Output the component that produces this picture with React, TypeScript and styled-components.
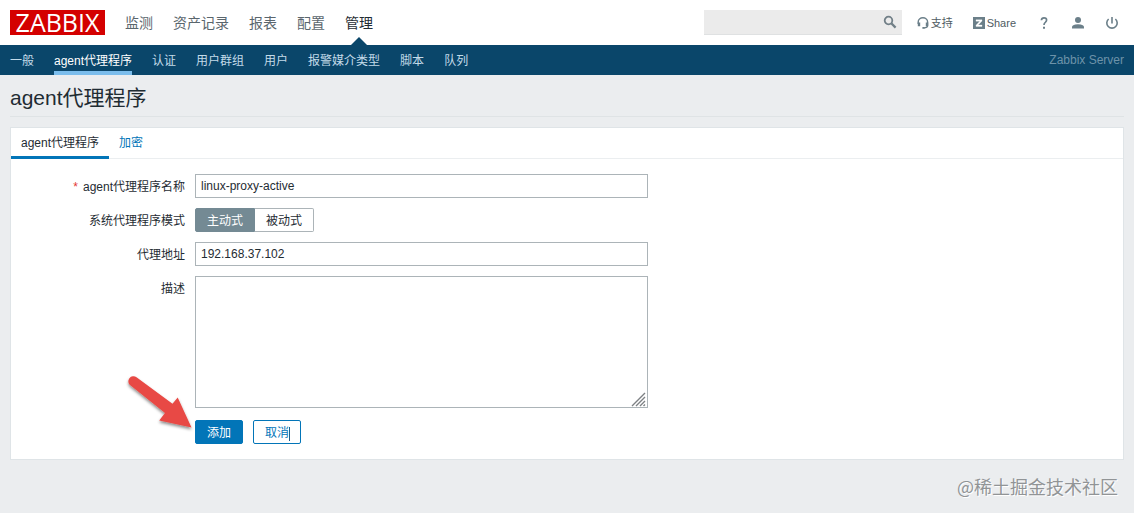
import React, { useState } from 'react';
import styled, { createGlobalStyle } from 'styled-components';

const GlobalStyle = createGlobalStyle`
  * { box-sizing: border-box; }
  body {
    margin: 0;
    background: #ebedef;
    color: #1f2c33;
    font-family: "Liberation Sans", "Noto Sans CJK SC", sans-serif;
    font-size: 12px;
    line-height: 18px;
  }
  input, button, textarea { font: inherit; color: inherit; }
  a { text-decoration: none; }
`;

const Page = styled.div`
  position: relative;
  min-height: 100vh;
`;

const TopBar = styled.header`
  display: flex;
  align-items: center;
  height: 45px;
  padding: 0 15px 0 10px;
  background: #ffffff;
`;

const Logo = styled.a`
  display: flex;
  align-items: center;
  justify-content: center;
  width: 95px;
  height: 25px;
  background: #d40000;
  color: #ffffff;
  font: 500 25px/25px "Open Sans", sans-serif;
`;

const MainMenu = styled.nav`
  display: flex;
  flex: 1;
  gap: 20px;
  margin-left: 20px;
`;

const MainLink = styled.a<{ $active?: boolean }>`
  position: relative;
  padding-top: 2px;
  color: ${(p) => (p.$active ? '#1f2c33' : '#5a666d')};
  font-size: 14px;
  line-height: 43px;
  white-space: nowrap;

  &::after {
    content: "";
    display: ${(p) => (p.$active ? 'block' : 'none')};
    position: absolute;
    bottom: 0;
    left: 50%;
    margin-left: -8px;
    border: 8px solid transparent;
    border-top-width: 0;
    border-bottom-color: #0a466a;
  }
`;

const SearchBox = styled.form`
  display: flex;
  align-items: center;
  width: 198px;
  height: 25px;
  padding-right: 5px;
  background: #ebebeb;
  border-bottom: 1px solid #dfe1e2;
`;

const SearchInput = styled.input`
  flex: 1;
  min-width: 0;
  height: 24px;
  padding: 0 6px;
  border: 0;
  outline: 0;
  background: transparent;
`;

const IconButton = styled.button`
  display: flex;
  padding: 0;
  border: 0;
  background: transparent;
  color: #6b7f89;
  cursor: pointer;
`;

const Tools = styled.nav`
  display: flex;
  align-items: center;
  margin-left: 15px;
  gap: 20px;
`;

const ToolLink = styled.a`
  display: flex;
  align-items: center;
  gap: 2px;
  color: #4f5b62;
  font-size: 11px;
  white-space: nowrap;
`;

const ToolIcons = styled.div`
  display: flex;
  gap: 20px;
  margin-left: 1px;
`;

const SubBar = styled.div`
  display: flex;
  justify-content: space-between;
  height: 30px;
  padding: 0 10px;
  background: #0a466a;
`;

const SubMenu = styled.nav`
  display: flex;
  gap: 20px;
`;

const SubLink = styled.a<{ $active?: boolean }>`
  padding-top: 2px;
  border-bottom: 4px solid ${(p) => (p.$active ? '#7bbdec' : 'transparent')};
  color: ${(p) => (p.$active ? '#ffffff' : '#c3dbe9')};
  line-height: 28px;
  white-space: nowrap;
`;

const ServerName = styled.span`
  color: #6d93a9;
  line-height: 30px;
`;

const Content = styled.main`
  padding: 0 10px;
`;

const Title = styled.h1`
  margin: 0 0 10px;
  padding: 9px 0 5px;
  border-bottom: 1px solid #dfe3e5;
  font-size: 21px;
  font-weight: 400;
  line-height: 27px;
`;

const Panel = styled.section`
  background: #ffffff;
  border: 1px solid #dfe4e7;
`;

const Tabs = styled.div`
  display: flex;
  border-bottom: 1px solid #ebeef0;
`;

const Tab = styled.button<{ $active?: boolean }>`
  height: 31px;
  margin-bottom: -1px;
  padding: 2px 10px 0;
  border: 0;
  border-bottom: 3px solid ${(p) => (p.$active ? '#0275b8' : 'transparent')};
  background: transparent;
  color: ${(p) => (p.$active ? '#1f2c33' : '#0275b8')};
  line-height: 26px;
`;

const Form = styled.form`
  display: flex;
  flex-direction: column;
  gap: 10px;
  padding: 15px 10px;
`;

const Row = styled.div`
  display: grid;
  grid-template-columns: 164px minmax(0, 453px);
  column-gap: 10px;
`;

const Label = styled.label<{ $required?: boolean }>`
  padding-top: 2px;
  line-height: 22px;
  text-align: right;

  &::before {
    content: "*";
    display: ${(p) => (p.$required ? 'inline' : 'none')};
    margin-right: 5px;
    color: #e33734;
  }
`;

const TextInput = styled.input`
  width: 100%;
  height: 24px;
  padding: 0 5px;
  border: 1px solid #acb4b8;
  outline: 0;
  background: #ffffff;
`;

const AreaBox = styled.div`
  position: relative;
  display: flex;
`;

const TextArea = styled.textarea`
  width: 100%;
  height: 132px;
  padding: 4px 5px;
  border: 1px solid #acb4b8;
  outline: 0;
  resize: none;
`;

const Grip = styled.svg`
  position: absolute;
  right: 1px;
  bottom: 1px;
  pointer-events: none;
`;

const Segments = styled.div`
  display: flex;
`;

const Segment = styled.label<{ $on: boolean }>`
  position: relative;
  height: 24px;
  padding: 2px 11px 0;
  border: 1px solid ${(p) => (p.$on ? '#748a94' : '#acb4b8')};
  background: ${(p) => (p.$on ? '#748a94' : '#ffffff')};
  color: ${(p) => (p.$on ? '#ffffff' : '#1f2c33')};
  line-height: 20px;

  &:first-child { border-radius: 2px 0 0 2px; }
  &:last-child { border-left-width: 0; border-radius: 0 2px 2px 0; }
`;

const Radio = styled.input`
  position: absolute;
  inset: 0;
  margin: 0;
  opacity: 0;
`;

const Actions = styled.div`
  position: relative;
  grid-column: 2;
  display: flex;
  gap: 10px;
  margin-top: 2px;
`;

const Button = styled.button<{ $outline?: boolean }>`
  height: 24px;
  padding: 2px 11px 0;
  border: 1px solid #0275b8;
  border-radius: 2px;
  background: ${(p) => (p.$outline ? '#ffffff' : '#0275b8')};
  color: ${(p) => (p.$outline ? '#0275b8' : '#ffffff')};
  line-height: 20px;
`;

const Caret = styled.span`
  display: inline-block;
  width: 1px;
  height: 14px;
  margin-right: -1px;
  background: #1f5f8c;
  vertical-align: middle;
`;

const Pointer = styled.svg`
  position: absolute;
  top: -48px;
  left: -72px;
  pointer-events: none;
`;

const Watermark = styled.div`
  position: absolute;
  right: 16px;
  bottom: 14px;
  color: #919496;
  font: 18px/26px "Noto Sans CJK SC", sans-serif;
  text-shadow: 1px 1px 0 #ffffff;
`;

const subItems = ['一般', 'agent代理程序', '认证', '用户群组', '用户', '报警媒介类型', '脚本', '队列'];
const mainItems = ['监测', '资产记录', '报表', '配置', '管理'];
const modes = ['主动式', '被动式'];

const SearchIcon = () => (
  <svg width="14" height="14" viewBox="0 0 14 14" fill="none" stroke="#717f87">
    <circle cx="5.5" cy="5.5" r="3.8" strokeWidth="1.8" />
    <path d="M8.4 8.4 L12.6 12.6" strokeWidth="2.2" />
  </svg>
);

const HeadsetIcon = () => (
  <svg width="12" height="12" viewBox="0 0 12 12" fill="none" stroke="#6b7f89">
    <path d="M1.2 7 V5 A4.7 4.2 0 0 1 10.6 5 V8.2 Q10.6 10.7 7 10.9" strokeWidth="1.4" />
    <path d="M2 5.6 V9.2 M10 5.6 V9.2" strokeWidth="2.4" />
    <path d="M5.4 10.9 H7.6" strokeWidth="1.8" />
  </svg>
);

const ShareIcon = () => (
  <svg width="12" height="12" viewBox="0 0 12 12">
    <rect width="12" height="12" fill="#6b7f89" />
    <path d="M3 2.8 H9 V4 L5.2 8 H9 V9.4 H3 V8.2 L6.8 4.2 H3 Z" fill="#fff" stroke="#fff" strokeWidth="0.3" />
  </svg>
);

const HelpIcon = () => (
  <svg width="14" height="14" viewBox="0 0 14 14" fill="none" stroke="currentColor">
    <path d="M4.4 4.2 Q4.6 1.9 7 1.9 Q9.6 1.9 9.6 4.1 Q9.6 5.4 8.3 6.4 Q7 7.3 7 9" strokeWidth="1.7" />
    <path d="M7 10.8 V12.8" strokeWidth="2" />
  </svg>
);

const UserIcon = () => (
  <svg width="14" height="14" viewBox="0 0 14 14" fill="currentColor">
    <circle cx="7" cy="4" r="3" />
    <path d="M1 12.6 V11.2 Q1 9.4 4.4 8.5 Q7 8 9.6 8.5 Q13 9.4 13 11.2 V12.6 Z" />
  </svg>
);

const PowerIcon = () => (
  <svg width="14" height="14" viewBox="0 0 14 14" fill="none" stroke="currentColor" strokeWidth="1.6">
    <path d="M3.6 3 A5.2 5.2 0 1 0 10.4 3" />
    <path d="M7 1 V7.4" />
  </svg>
);

export default function App() {
  const [mode, setMode] = useState(modes[0]);

  return (
    <Page>
      <GlobalStyle />
      <TopBar>
        <Logo href="#">ZABBIX</Logo>
        <MainMenu>
          {mainItems.map((item) => (
            <MainLink key={item} href="#" $active={item === '管理'}>{item}</MainLink>
          ))}
        </MainMenu>
        <SearchBox>
          <SearchInput type="text" aria-label="搜索" />
          <IconButton type="button" aria-label="搜索"><SearchIcon /></IconButton>
        </SearchBox>
        <Tools>
          <ToolLink href="#"><HeadsetIcon />支持</ToolLink>
          <ToolLink href="#"><ShareIcon />Share</ToolLink>
          <ToolIcons>
            <IconButton aria-label="帮助"><HelpIcon /></IconButton>
            <IconButton aria-label="用户资料"><UserIcon /></IconButton>
            <IconButton aria-label="退出"><PowerIcon /></IconButton>
          </ToolIcons>
        </Tools>
      </TopBar>
      <SubBar>
        <SubMenu>
          {subItems.map((item) => (
            <SubLink key={item} href="#" $active={item === 'agent代理程序'}>{item}</SubLink>
          ))}
        </SubMenu>
        <ServerName>Zabbix Server</ServerName>
      </SubBar>
      <Content>
        <Title>agent代理程序</Title>
        <Panel>
          <Tabs>
            <Tab type="button" $active>agent代理程序</Tab>
            <Tab type="button">加密</Tab>
          </Tabs>
          <Form onSubmit={(e) => e.preventDefault()}>
            <Row>
              <Label htmlFor="name" $required>agent代理程序名称</Label>
              <TextInput id="name" type="text" defaultValue="linux-proxy-active" />
            </Row>
            <Row>
              <Label as="span" id="mode-label">系统代理程序模式</Label>
              <Segments role="radiogroup" aria-labelledby="mode-label">
                {modes.map((m) => (
                  <Segment key={m} $on={mode === m}>
                    <Radio type="radio" name="mode" checked={mode === m} onChange={() => setMode(m)} />
                    {m}
                  </Segment>
                ))}
              </Segments>
            </Row>
            <Row>
              <Label htmlFor="address">代理地址</Label>
              <TextInput id="address" type="text" defaultValue="192.168.37.102" />
            </Row>
            <Row>
              <Label htmlFor="description">描述</Label>
              <AreaBox>
                <TextArea id="description" />
                <Grip width="16" height="16" viewBox="0 0 16 16" stroke="#7d8184" strokeWidth="1.4">
                  <path d="M1 15 L14 2 M5 15 L14 6 M9 15 L14 10 M12.5 15 L14 13.5" />
                </Grip>
              </AreaBox>
            </Row>
            <Row>
              <Actions>
                <Button type="submit">添加</Button>
                <Button type="button" $outline>取消<Caret /></Button>
                <Pointer width="76" height="66" viewBox="0 0 76 66">
                  <defs>
                    <filter id="shade" x="-20%" y="-20%" width="140%" height="150%">
                      <feDropShadow dx="0" dy="2" stdDeviation="1.5" floodColor="#000" floodOpacity="0.45" />
                    </filter>
                  </defs>
                  <path
                    d="M13.5 5.3 L49.5 31.7 L54.7 25.5 L68.5 55.4 L36.2 48.6 L42 41 L7.3 13.3 A5 5 0 0 1 13.5 5.3 Z"
                    fill="#e84a45"
                    filter="url(#shade)"
                  />
                </Pointer>
              </Actions>
            </Row>
          </Form>
        </Panel>
      </Content>
      <Watermark>@稀土掘金技术社区</Watermark>
    </Page>
  );
}
